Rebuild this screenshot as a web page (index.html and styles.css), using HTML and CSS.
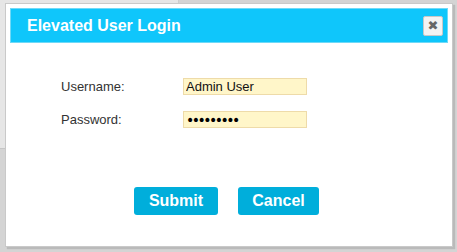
FILE: index.html
```html
<!DOCTYPE html>
<html lang="en">
<head>
  <meta charset="UTF-8">
  <title>Elevated User Login</title>
  <link rel="stylesheet" href="styles.css">
</head>
<body>
  <div class="page-panel"></div>
  <div class="dialog">
    <div class="dialog-header">
      <div class="dialog-title">Elevated User Login</div>
      <button class="close-btn">&#x2716;</button>
    </div>
    <div class="dialog-body">
      <div class="form-row">
        <label class="form-label">Username:</label>
        <input class="form-input" type="text" value="Admin User">
      </div>
      <div class="form-row">
        <label class="form-label">Password:</label>
        <input class="form-input password-input" type="password" value="secret123">
      </div>
      <div class="button-row">
        <button class="action-btn submit-btn">Submit</button>
        <button class="action-btn cancel-btn">Cancel</button>
      </div>
    </div>
  </div>
</body>
</html>
```

FILE: styles.css
```css
body {
  margin: 0;
  height: 252px;
  overflow: hidden;
  background: #d4d4d4;
  font-family: "Liberation Sans", Arial, sans-serif;
  position: relative;
}
.page-panel {
  position: absolute;
  left: 0;
  top: 0;
  width: 178px;
  height: 148px;
  background: #e6e6e6;
  border-right: 1px solid #cdcdcd;
  border-bottom: 1px solid #c6c6c6;
}
.dialog {
  position: relative;
  margin: 3px 0 0 5px;
  width: 448px;
  height: 244px;
  box-sizing: border-box;
  background: #fff;
  border: 1px solid #c9c9c9;
  padding: 4px;
  box-shadow: 2px 2px 1px rgba(0, 0, 0, 0.12);
}
.dialog-header {
  height: 35px;
  box-sizing: border-box;
  background: #0fc6fb;
  border: 1px solid #6fd9f7;
  display: flex;
  align-items: center;
  justify-content: space-between;
  padding: 0 4px 0 16px;
}
.dialog-title {
  color: #fff;
  font-size: 16px;
  font-weight: bold;
}
.close-btn {
  width: 20px;
  height: 20px;
  padding: 0;
  background: #f3f3f3;
  border: 1px solid #c8c8c8;
  border-radius: 2px;
  color: #666;
  font-size: 13px;
  line-height: 18px;
  font-family: "DejaVu Sans", sans-serif;
  cursor: pointer;
}
.dialog-body {
  padding: 35px 0 0 51px;
}
.form-row {
  display: flex;
  align-items: center;
  margin-bottom: 16px;
}
.form-label {
  width: 122px;
  font-size: 13px;
  color: #333;
}
.form-input {
  width: 124px;
  height: 17px;
  box-sizing: border-box;
  margin: 0;
  padding: 0 2px;
  background: #fff6c9;
  border: 1px solid #eedba9;
  font-family: inherit;
  font-size: 13px;
  color: #111;
  outline: none;
}
.password-input {
  font-family: "DejaVu Sans", sans-serif;
  font-size: 14px;
  letter-spacing: -2.5px;
  color: #000;
}
.button-row {
  display: flex;
  gap: 20px;
  margin: 59px 0 0 73px;
}
.action-btn {
  height: 28px;
  padding: 0;
  border: none;
  border-radius: 3px;
  background: #00aedb;
  color: #fff;
  font-family: inherit;
  font-size: 16px;
  font-weight: bold;
  cursor: pointer;
}
.submit-btn { width: 84px; }
.cancel-btn { width: 81px; }
```
